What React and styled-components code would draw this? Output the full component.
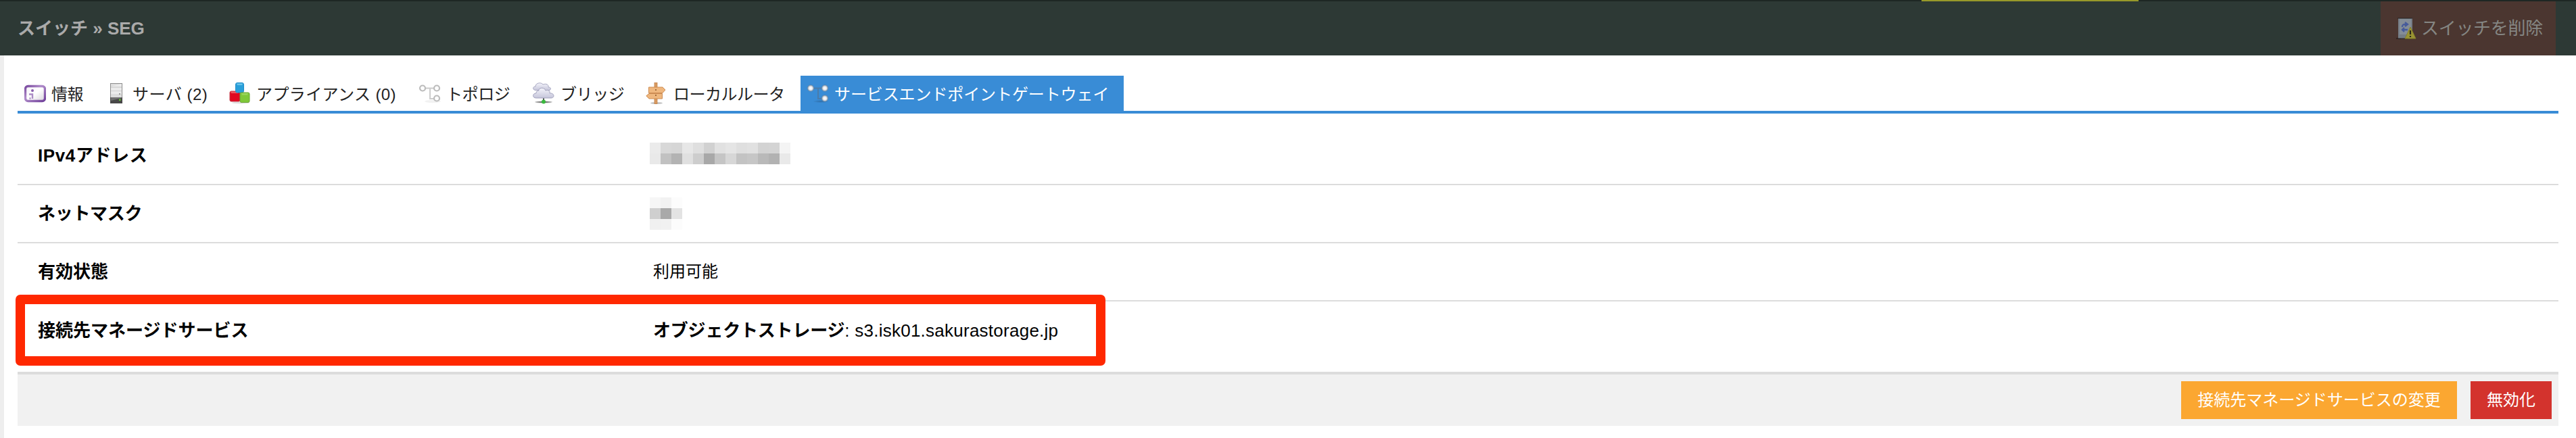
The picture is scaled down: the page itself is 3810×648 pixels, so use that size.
import React from 'react';
import styled, { createGlobalStyle } from 'styled-components';

const Global = createGlobalStyle`
  * { box-sizing: border-box; }
  body { margin: 0; background: #fff; font-family: "Liberation Sans", "Noto Sans CJK JP", sans-serif; }
`;

const Page = styled.div`
  width: 3810px;
  height: 648px;
  display: flex;
  flex-direction: column;
  overflow: hidden;
`;

const TopEdge = styled.div`
  height: 2px;
  background: #1e2724;
  display: flex;
`;

const Progress = styled.div`
  margin-left: 2842px;
  width: 321px;
  background: #98992a;
`;

const Header = styled.header`
  height: 80px;
  padding: 0 30px 0 26px;
  background: #2d3935;
  display: flex;
  justify-content: space-between;
  align-items: stretch;
`;

const Text = styled.span`
  display: block;
  white-space: nowrap;
  line-height: 1;
  font-size: ${(p) => p.$size || 24}px;
  font-weight: ${(p) => p.$weight || 400};
  letter-spacing: ${(p) => p.$track || 0}px;
  color: ${(p) => p.$color || 'inherit'};
`;

const Title = styled.h1`
  margin: 0;
  display: flex;
  align-items: center;
`;

const DeleteButton = styled.button`
  width: 259px;
  padding: 0 0 0 23px;
  border: 0;
  background: #4b3630;
  color: #858683;
  font-family: inherit;
  display: flex;
  align-items: center;
  gap: 7px;
`;

const Body = styled.main`
  flex: 1;
  border-left: 6px solid #eee;
  padding: 30px 26px 0 20px;
`;

const Tabs = styled.nav`
  height: 56px;
  border-bottom: 4px solid #398cd6;
  display: flex;
`;

const Tab = styled.div`
  width: ${(p) => p.$width}px;
  padding-left: 10px;
  display: flex;
  align-items: center;
  gap: ${(p) => p.$gap}px;
  color: ${(p) => (p.$active ? '#fff' : '#222')};
  background: ${(p) => (p.$active ? '#398cd6' : 'transparent')};

  ${Text} {
    padding-top: 4px;
  }
`;

const Row = styled.div`
  height: 86px;
  padding-left: 30px;
  border-bottom: ${(p) => (p.$last ? 0 : '2px solid #dcdcdc')};
  display: flex;
  align-items: center;
  color: #000;
`;

const Table = styled.section`
  height: 382px;
  padding-top: 20px;
  position: relative;
`;

const Label = styled.div`
  width: 910px;
  flex: none;
`;

const Value = styled.div`
  display: flex;
  align-items: center;
`;

const Highlight = styled.div`
  position: absolute;
  left: -3px;
  top: 268px;
  width: 1612px;
  height: 105px;
  border: 14px solid #ff2800;
  border-radius: 7px;
`;

const Actions = styled.footer`
  height: 80px;
  padding: 10px 10px 0 0;
  border-top: 4px solid #dcdcdc;
  background: #f1f1f1;
  display: flex;
  justify-content: flex-end;
  gap: 20px;
`;

const Action = styled.button`
  width: ${(p) => p.$width}px;
  height: 56px;
  padding: 0;
  border: 0;
  background: ${(p) => p.$bg};
  color: #fff;
  font-family: inherit;
  display: flex;
  align-items: center;
  justify-content: center;
`;

const Mosaic = styled.div`
  display: grid;
  grid-template-columns: repeat(${(p) => p.$cols}, 16px);
  grid-auto-rows: 16px;
  margin-left: -5px;
  margin-bottom: ${(p) => p.$lift || 0}px;
`;

const Cell = styled.i`
  background: ${(p) => p.$c};
`;

const InfoIcon = () => (
  <svg width="32" height="32" viewBox="0 0 32 32">
    <defs>
      <linearGradient id="ii" x1="0" y1="0" x2="1" y2="1"><stop offset="0" stopColor="#f4f1f7" /><stop offset=".5" stopColor="#fff" /><stop offset="1" stopColor="#d6d2da" /></linearGradient>
      <linearGradient id="ib" x1="0" y1="0" x2="1" y2="1"><stop offset="0" stopColor="#7a4a9f" /><stop offset=".4" stopColor="#b08cca" /><stop offset="1" stopColor="#70409a" /></linearGradient>
    </defs>
    <rect x="1.500" y="5.500" width="29" height="22" rx="4" fill="url(#ii)" stroke="url(#ib)" strokeWidth="3.400" />
    <circle cx="12" cy="12" r="2" fill="#8a5fae" />
    <path d="M7 17.500H12V24M7.500 23.500h2" fill="none" stroke="#ab8cc5" strokeWidth="2.400" />
  </svg>
);

const ServerIcon = () => (
  <svg width="18" height="30" viewBox="0 0 18 30">
    <rect x=".5" y=".5" width="17" height="29" fill="#dedede" stroke="#8d8d8d" />
    <path d="M1 5L17 1V5zM1 7h16v4H1zM1 12h16v4H1z" fill="#ececec" />
    <path d="M1 6h16M1 11.500h16" stroke="#cfcfcf" />
    <rect x="13" y="15" width="2" height="2" fill="#999" />
    <rect x="0" y="21" width="18" height="9" fill="#484848" />
    <path d="M1 26L17 22v-1H1z" fill="#717171" />
    <rect x="13" y="23.500" width="2.500" height="2.500" fill="#66c832" />
  </svg>
);

const CubesIcon = () => (
  <svg width="32" height="32" viewBox="0 0 32 32">
    <ellipse cx="17" cy="30" rx="13" ry="1.400" fill="#ddd" />
    <rect x="1" y="13" width="15" height="15" rx="2" fill="#e00820" stroke="#c13040" />
    <path d="M2 13.500h12l-1 2.500H3z" fill="#ec5a66" />
    <rect x="9.500" y=".5" width="12" height="14.500" rx="2.500" fill="#299fd9" stroke="#238dc8" />
    <path d="M11 1.500h9l-1 2.500h-7z" fill="#68c3eb" />
    <rect x="16" y="15" width="14" height="14.500" rx="2" fill="#7fc83a" stroke="#6aa533" />
    <path d="M18 16h10l-1 2.500h-8z" fill="#9cd65e" />
  </svg>
);

const TopologyIcon = ({ active }) => (
  <svg width="32" height="32" viewBox="0 0 32 32">
    <defs>
      <radialGradient id="tn"><stop offset="0" stopColor="#fff" /><stop offset=".5" stopColor="#e8eaed" /><stop offset="1" stopColor="#5d7f9f" /></radialGradient>
      <radialGradient id="ts"><stop offset="0" stopColor="#2f6ea8" /><stop offset="1" stopColor="#398cd6" /></radialGradient>
    </defs>
    <ellipse cx="20" cy="28" rx="12" ry="2.200" fill={active ? 'url(#ts)' : '#f2f2f2'} />
    <path d="M9 8.500H22M16 8.500V24h7" fill="none" stroke={active ? '#4a7cab' : '#ccc'} strokeWidth="2" />
    {[[5, 8.5], [26, 8.5], [26, 23.5]].map(([x, y]) => (
      <circle key={`${x}-${y}`} cx={x} cy={y} r={active ? 5 : 4} fill={active ? 'url(#tn)' : '#fff'} stroke={active ? 'none' : '#bcbcbc'} strokeWidth="2.200" />
    ))}
  </svg>
);

const BridgeIcon = () => (
  <svg width="32" height="32" viewBox="0 0 32 32">
    <defs>
      <linearGradient id="cl" x1="0" y1="0" x2="0" y2="1"><stop offset="0" stopColor="#f4f4fb" /><stop offset="1" stopColor="#c5c5da" /></linearGradient>
      <radialGradient id="bs"><stop offset="0" stopColor="#333" /><stop offset="1" stopColor="#ccc" /></radialGradient>
    </defs>
    <ellipse cx="16" cy="29" rx="13" ry="1.600" fill="url(#bs)" />
    <path d="M16 23v6" stroke="#555" strokeWidth="2" />
    <circle cx="16" cy="28.500" r="3" fill="#3ab83e" />
    <path d="M4 11.500C-1 11 0 5.500 4 6c0-6 9-6.500 11-3 5-2 9 .5 8 4 5 0 4 4.500 1 4.500z" fill="url(#cl)" stroke="#a9a9c2" />
    <path d="M5 23c-6 0-6-7 0-7 0-3 2-4 4-4-1-4 8-6 10 0 4-2 7 1 6 4 7-1 8 7 2 7z" fill="url(#cl)" stroke="#a3a3be" />
  </svg>
);

const SignIcon = () => (
  <svg width="32" height="32" viewBox="0 0 32 32">
    <ellipse cx="16" cy="30.500" rx="9" ry="1.300" fill="#bbb" />
    <rect x="13" y=".5" width="4" height="31" fill="#d99b62" stroke="#c07f48" strokeWidth=".8" />
    <path d="M4.500 7H25l4 4-4 4.500H4.500z" fill="#efb77e" stroke="#cd8c53" />
    <path d="M24.500 16.500H5L.8 19.800 5 24h19.500z" fill="#efb77e" stroke="#cd8c53" />
    <circle cx="15" cy="11" r="1" fill="#875225" />
    <circle cx="15" cy="19" r="1" fill="#875225" />
  </svg>
);

const SwitchWarnIcon = () => (
  <svg width="30" height="34" viewBox="0 0 30 34">
    <path d="M0 32h7" stroke="#2c211e" strokeWidth="1.500" />
    <rect x="3" y="2" width="21" height="30" fill="#757d86" />
    <path d="M2 2h22M3 32h14" stroke="#252322" />
    <rect x="5" y="3" width="17" height="23" fill="#848d97" />
    <path d="M9 15c0-4 2-4 6-4m-2-3l4 3-4 3M17 19H9m3-3l-3 3 3 3" fill="none" stroke="#465b9b" strokeWidth="2.300" />
    <path d="M21 15L29 32H13z" fill="#999433" stroke="#868128" />
    <path d="M21 20v6M21 28v2" stroke="#2b291b" strokeWidth="2.200" />
  </svg>
);

const tabs = [
  { label: '情報', icon: InfoIcon, width: 127, gap: 8, track: -0.5 },
  { label: 'サーバ (2)', icon: ServerIcon, width: 176, gap: 15, track: 0.5 },
  { label: 'アプライアンス (0)', icon: CubesIcon, width: 281, gap: 8, track: 0.4 },
  { label: 'トポロジ', icon: TopologyIcon, width: 168, gap: 8, track: -0.4 },
  { label: 'ブリッジ', icon: BridgeIcon, width: 167, gap: 9, track: -0.4 },
  { label: 'ローカルルータ', icon: SignIcon, width: 239, gap: 9, track: -0.5 },
  { label: 'サービスエンドポイントゲートウェイ', icon: TopologyIcon, width: 478, gap: 8, track: -0.1, active: true },
];

const addressCells = [
  '#ebebeb', '#d8d8d8', '#d6d6d6', '#e7e7e7', '#dfdfdf', '#d1d1d1', '#e1e1e1', '#e5e5e5', '#dfdfdf', '#e1e1e1', '#d3d3d3', '#d4d4d4', '#f4f4f4',
  '#e9e9e9', '#c1c1c1', '#b3b3b3', '#e0e0e0', '#cdcdcd', '#a8a8a8', '#c5c5c5', '#d7d7d7', '#c3c3c3', '#c6c6c6', '#b9b9b9', '#b2b2b2', '#e9e9e9',
];
const maskCells = ['#f6f6f6', '#f2f2f2', '#fcfcfc', '#cfcfcf', '#a9a9a9', '#e3e3e3', '#f0f0f0', '#f1f1f1', '#fcfcfc'];

export default function App() {
  return (
    <Page>
      <Global />
      <TopEdge><Progress /></TopEdge>
      <Header>
        <Title><Text $size={26} $weight={700} $color="#aaa">スイッチ » SEG</Text></Title>
        <DeleteButton><SwitchWarnIcon /><Text $size={26} $track={-0.3}>スイッチを削除</Text></DeleteButton>
      </Header>
      <Body>
        <Tabs>
          {tabs.map(({ label, icon: Icon, width, gap, track, active }) => (
            <Tab key={label} $width={width} $gap={gap} $active={active}>
              <Icon active={active} />
              <Text $track={track}>{label}</Text>
            </Tab>
          ))}
        </Tabs>
        <Table>
          <Row>
            <Label><Text $size={26} $weight={700} $track={0.6}>IPv4アドレス</Text></Label>
            <Value><Mosaic $cols={13} $lift={7}>{addressCells.map((c, i) => <Cell key={i} $c={c} />)}</Mosaic></Value>
          </Row>
          <Row>
            <Label><Text $size={26} $weight={700} $track={-0.3}>ネットマスク</Text></Label>
            <Value><Mosaic $cols={3}>{maskCells.map((c, i) => <Cell key={i} $c={c} />)}</Mosaic></Value>
          </Row>
          <Row>
            <Label><Text $size={26} $weight={700}>有効状態</Text></Label>
            <Value><Text>利用可能</Text></Value>
          </Row>
          <Row $last>
            <Label><Text $size={26} $weight={700}>接続先マネージドサービス</Text></Label>
            <Value>
              <Text $size={26} $weight={700} $track={-0.2}>オブジェクトストレージ</Text>
              <Text $size={26} $track={0.25}>:&nbsp;s3.isk01.sakurastorage.jp</Text>
            </Value>
          </Row>
          <Highlight />
        </Table>
        <Actions>
          <Action $width={408} $bg="#fba731"><Text>接続先マネージドサービスの変更</Text></Action>
          <Action $width={120} $bg="#d3332d"><Text>無効化</Text></Action>
        </Actions>
      </Body>
    </Page>
  );
}
